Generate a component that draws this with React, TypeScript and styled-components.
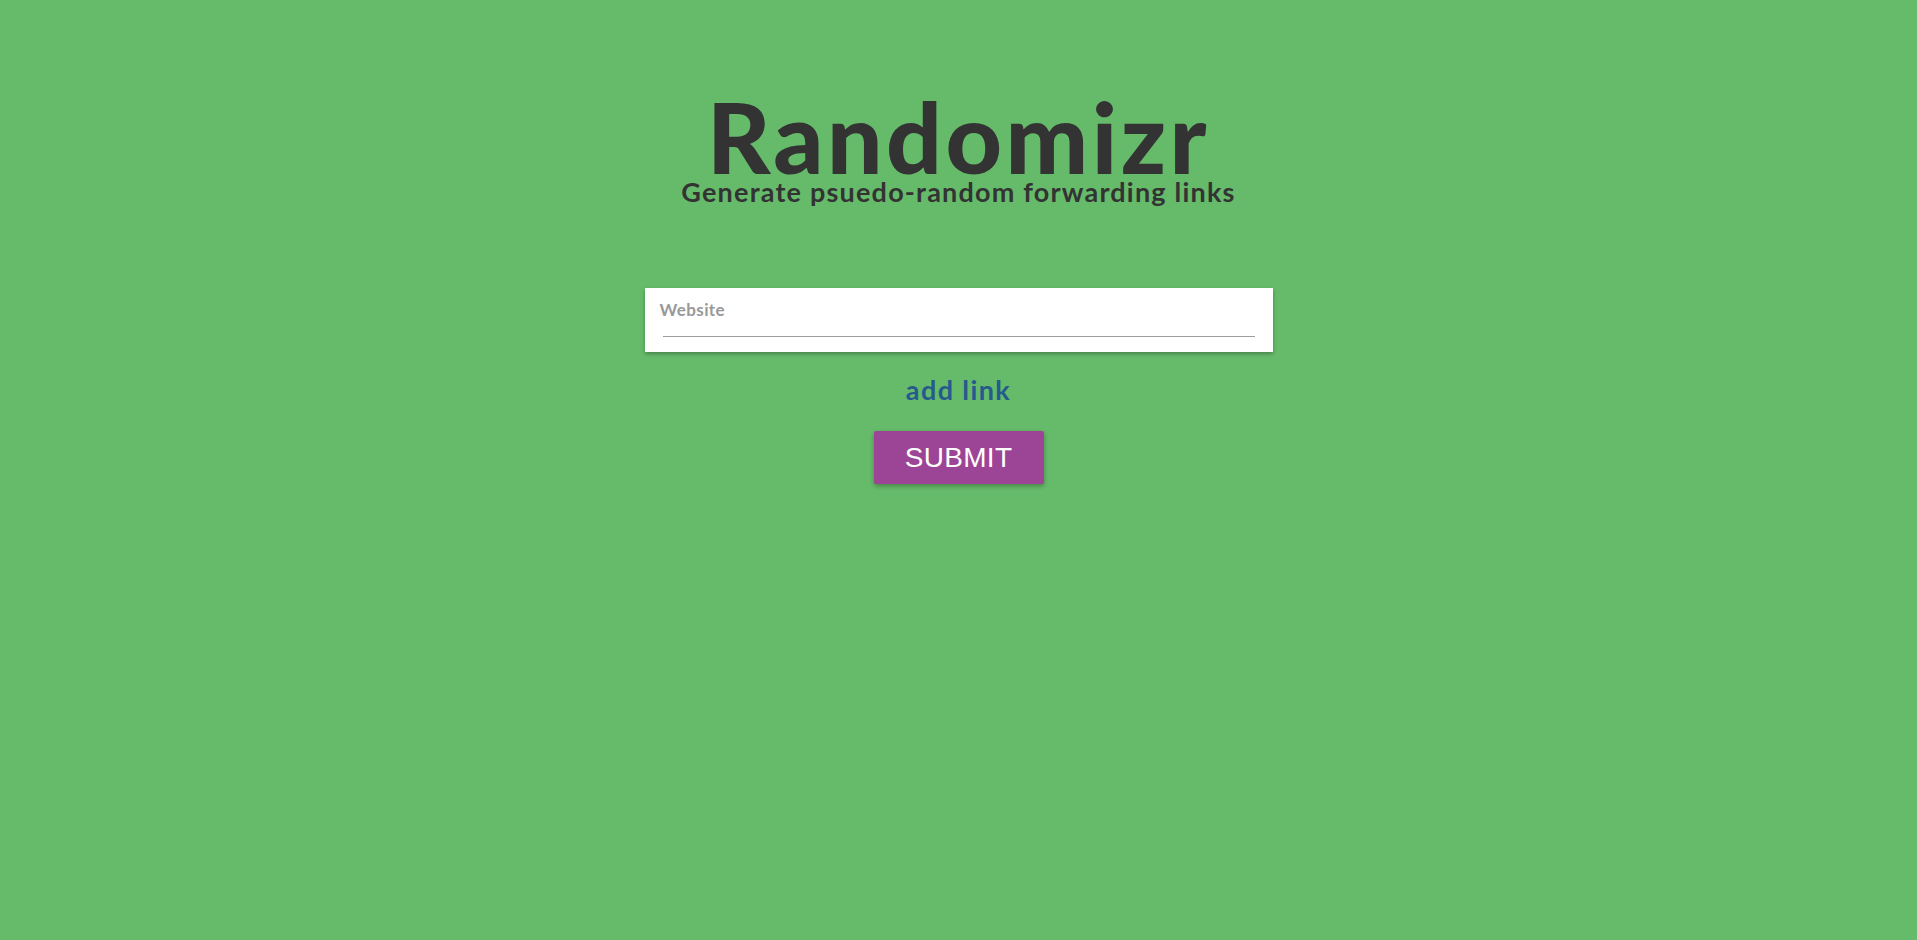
import React from "react";
import styled, { createGlobalStyle } from "styled-components";

const Global = createGlobalStyle`
  html, body { margin: 0; padding: 0; background: #66bb6a; }
  body { font-family: "Lato", "Noto Sans", sans-serif; color: #333; }
`;

const Page = styled.main`
  min-height: 940px;
  display: flex;
  flex-direction: column;
  align-items: center;
  padding-top: 94px;
  box-sizing: border-box;
`;

const Title = styled.h1`
  margin: 0;
  font-family: "Lato", sans-serif;
  font-weight: 900;
  font-size: 98px;
  line-height: 84px;
  color: #333;
  letter-spacing: 3.5px;
`;

const Subtitle = styled.h2`
  margin: 0;
  font-family: "Lato", sans-serif;
  font-weight: 700;
  font-size: 27px;
  line-height: 28px;
  letter-spacing: 1.2px;
  color: #333;
`;

const Card = styled.form`
  margin-top: 82px;
  width: 628px;
  height: 64px;
  background: #fff;
  box-shadow: 0 2px 4px rgba(0, 0, 0, 0.3);
  box-sizing: border-box;
  padding: 12px 18px 0 15px;
  display: flex;
  flex-direction: column;
`;

const Label = styled.label`
  font-family: "Lato", sans-serif;
  font-weight: 700;
  font-size: 17px;
  letter-spacing: 0.4px;
  color: #999;
  line-height: 20px;
`;

const Input = styled.input`
  margin: 1px 0 0 3px;
  border: none;
  border-bottom: 1px solid #9e9e9e;
  outline: none;
  height: 15px;
  padding: 0;
  background: transparent;
`;

const AddLink = styled.a`
  margin-top: 21px;
  font-family: "Lato", sans-serif;
  font-weight: 700;
  font-size: 27px;
  line-height: 34px;
  letter-spacing: 1.4px;
  color: #265a8c;
  text-decoration: none;
  cursor: pointer;
`;

const Submit = styled.button`
  margin-top: 24px;
  width: 170px;
  height: 53px;
  border: none;
  border-radius: 2px;
  background: #9c4596;
  color: #fff;
  font-family: "Liberation Sans", Arial, sans-serif;
  font-size: 28px;
  letter-spacing: 0.3px;
  box-shadow: 0 2px 5px rgba(0, 0, 0, 0.3);
  cursor: pointer;
`;

export default function App() {
  return (
    <>
      <Global />
      <Page>
        <Title>Randomizr</Title>
        <Subtitle>Generate psuedo-random forwarding links</Subtitle>
        <Card onSubmit={(e) => e.preventDefault()}>
          <Label htmlFor="site">Website</Label>
          <Input id="site" type="text" />
        </Card>
        <AddLink>add link</AddLink>
        <Submit type="button">SUBMIT</Submit>
      </Page>
    </>
  );
}
